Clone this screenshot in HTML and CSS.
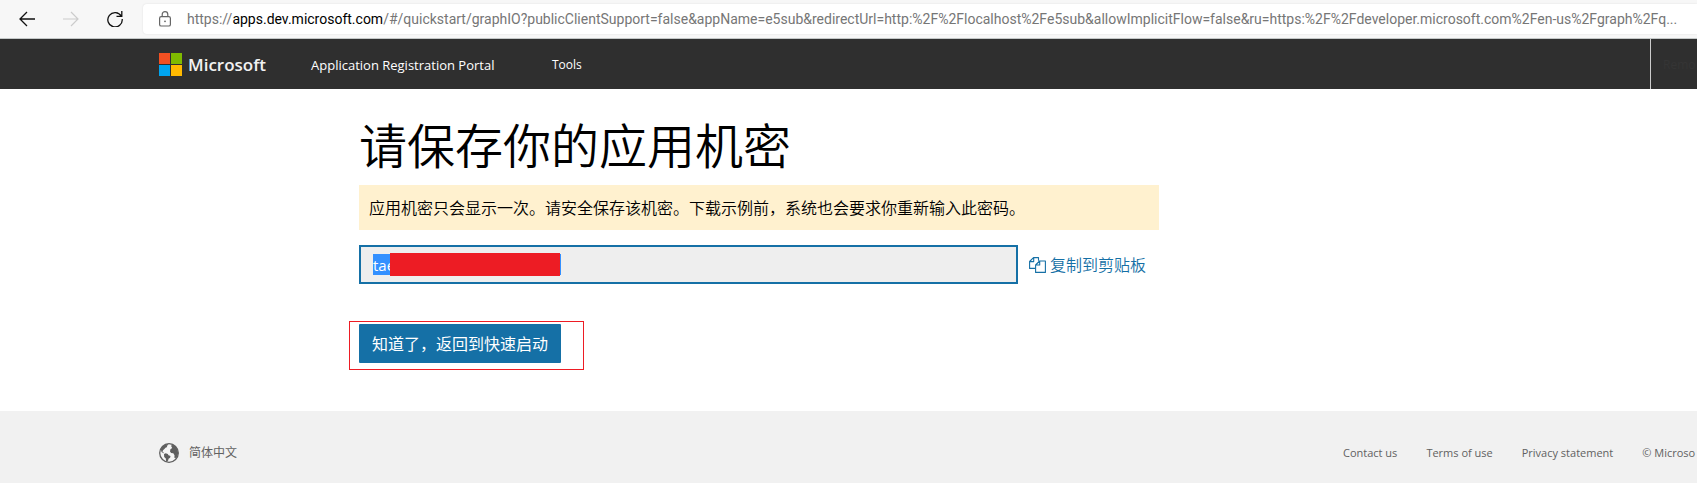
FILE: index.html
```html
<!DOCTYPE html>
<html lang="zh-CN">
<head>
<meta charset="utf-8">
<title>Application Registration Portal</title>
<link rel="stylesheet" href="styles.css">
</head>
<body>
<div class="toolbar">
  <button class="nav-button" type="button" aria-label="Back">
    <svg width="16" height="16" viewBox="0 0 16 16" fill="none" stroke="#111" stroke-width="1.3"><path d="M16 8H1M8 1L1 8l7 7"/></svg>
  </button>
  <button class="nav-button" type="button" aria-label="Forward" disabled>
    <svg width="16" height="16" viewBox="0 0 16 16" fill="none" stroke="#ccc" stroke-width="1.2"><path d="M0 8h15M8 1l7 7-7 7"/></svg>
  </button>
  <button class="nav-button" type="button" aria-label="Reload">
    <svg width="16" height="16" viewBox="0 0 16 16" fill="none" stroke="#111" stroke-width="1.3"><path d="M14.3 5.2A7.2 7.2 0 1 0 15.2 8M14.8 0v5.3H9.5"/></svg>
  </button>
  <div class="address">
    <svg class="lock" width="12" height="16" viewBox="0 0 12 16" fill="none" stroke="#666" stroke-width="1.2"><rect x=".6" y="5.6" width="10.8" height="9.4" rx="1.6"/><path d="M3.2 5.6V3.4a2.8 2.8 0 0 1 5.6 0v2.2"/><circle cx="6" cy="10.3" r=".9" fill="#666" stroke="none"/></svg>
    <span class="url">https://<span class="host">apps.dev.microsoft.com</span>/#/quickstart/graphIO?publicClientSupport=false&amp;appName=e5sub&amp;redirectUrl=http:%2F%2Flocalhost%2Fe5sub&amp;allowImplicitFlow=false&amp;ru=https:%2F%2Fdeveloper.microsoft.com%2Fen-us%2Fgraph%2Fq...</span>
  </div>
</div>

<header class="header">
  <a class="logo" href="#">
    <svg width="23" height="23" viewBox="0 0 23 23"><path fill="#f25022" d="M0 0h11v11H0z"/><path fill="#7fba00" d="M12 0h11v11H12z"/><path fill="#00a4ef" d="M0 12h11v11H0z"/><path fill="#ffb900" d="M12 12h11v11H12z"/></svg>
    <span>Microsoft</span>
  </a>
  <a class="portal" href="#">Application Registration Portal</a>
  <a class="tools" href="#">Tools</a>
  <div class="account">Remo</div>
</header>

<main class="main">
  <h1 class="title">请保存你的应用机密</h1>
  <p class="notice">应用机密只会显示一次。请安全保存该机密。下载示例前，系统也会要求你重新输入此密码。</p>
  <div class="secret-row">
    <div class="secret">
      <input class="secret-input" type="text" value="tae" aria-label="应用机密" readonly>
      <span class="redaction"></span>
    </div>
    <a class="copy" href="#">
      <svg width="17" height="16" viewBox="0 0 17 16" fill="none" stroke="#1570a6" stroke-width="1.1" stroke-linejoin="round"><path d="M6.4 11.4H.6V4.5L4.5.6h5v3.1M4.7.6v4H.6"/><path d="M10.6 4h5.8v11.4H6.6V8zM10.7 4v4H6.6"/></svg>
      <span>复制到剪贴板</span>
    </a>
  </div>
  <div class="highlight">
    <button class="primary" type="button">知道了，返回到快速启动</button>
  </div>
</main>

<footer class="footer">
  <a class="language" href="#">
    <svg width="20" height="20" viewBox="0 0 20 20"><circle cx="10" cy="10" r="9.3" fill="#f5f5f5" stroke="#5f5f5f" stroke-width="1.3"/><g fill="#5f5f5f"><path d="M2.2 5.2C4 2.8 6.2 1.3 8.9 1l.4 1-1.5.7.4 1.4-1.7.6L5.4 6 4 7.3l-.5 1.4 1.7 1.2-.5.4-2.2-1.4-.6-2.2z"/><path d="M5 11l1.7-.7 2.1.8.7 1.1 2 .8-.4 1.8-1.5 1-.5 1.7-1.3 1.5-.6-.2-.4-3.4L5.2 14z"/><path d="M12 2.6l2.3-.9 2.5 2.1 1.7 2.8.7 3.7-1 3.2-1.9 1.8-.9-.6.1-2.4-1.2-2.1-2.2-.3-1.1-1.5.4-2.2 1.8-1.2-.7-1.2z"/></g></svg>
    <span>简体中文</span>
  </a>
  <nav class="links">
    <a href="#">Contact us</a>
    <a href="#">Terms of use</a>
    <a href="#">Privacy statement</a>
    <span>© Microso</span>
  </nav>
</footer>
</body>
</html>
```
FILE: styles.css
```css
* {
  box-sizing: border-box;
}

body {
  margin: 0;
  background: #fff;
  color: #000;
  font-family: "Open Sans", "Noto Sans CJK SC", sans-serif;
  font-size: 16px;
  overflow-x: hidden;
}

a {
  color: inherit;
  text-decoration: none;
}

button {
  border: 0;
  font: inherit;
}

svg {
  display: block;
  flex: none;
}

.toolbar {
  display: flex;
  align-items: center;
  gap: 28px;
  height: 39px;
  padding-left: 19px;
  padding-bottom: 1px;
  background: #f7f7f7;
  border-bottom: 1px solid #c4c8c8;
}

.nav-button {
  padding: 0;
  background: none;
}

.address {
  display: flex;
  flex: 1;
  align-items: center;
  gap: 16px;
  min-width: 0;
  height: 30px;
  margin-left: -8px;
  padding-left: 16px;
  background: #fff;
  border-radius: 4px 0 0 4px;
  box-shadow: 0 0 2px #ddd;
}

.url {
  color: #767676;
  font-family: Roboto, sans-serif;
  font-size: 14px;
  white-space: nowrap;
}

.host {
  color: #000;
}

.header {
  display: flex;
  align-items: center;
  height: 50px;
  padding-left: 159px;
  background: #2f2f2f;
  color: #fff;
  white-space: nowrap;
}

.logo {
  display: flex;
  align-items: center;
  gap: 6px;
  width: 152px;
  color: #f2f2f2;
  font-size: 17px;
  font-weight: 600;
}

.portal {
  width: 241px;
  padding-top: 1px;
  font-size: 13px;
}

.tools {
  padding-top: 1px;
  font-size: 12px;
}

.account {
  display: flex;
  align-items: center;
  width: 47px;
  height: 100%;
  margin-left: auto;
  padding-left: 12px;
  border-left: 1px solid #ccc;
  color: #353535;
  font-size: 12px;
}

.main {
  max-width: 1159px;
  padding: 25px 0 41px 359px;
}

.title {
  margin: 0 0 7px;
  font-size: 48px;
  font-weight: 350;
  line-height: 64px;
}

.notice {
  margin: 0 0 15px;
  padding: 11px 10px 9px;
  background: #fff1cf;
  font-weight: 350;
  line-height: 25px;
}

.secret-row {
  display: flex;
  align-items: center;
  gap: 11px;
}

.secret {
  position: relative;
  flex: 0 1 659px;
  height: 39px;
  padding: 7px 12px;
  background: #eee;
  border: 2px solid #1570a6;
}

.secret-input {
  display: block;
  width: 188px;
  height: 21px;
  padding: 0;
  border: 0;
  background: #3390ff;
  color: #fff;
  font: inherit;
  font-size: 15px;
}

.redaction {
  position: absolute;
  top: 6px;
  left: 29px;
  width: 170px;
  height: 23px;
  background: #ed1c24;
}

.copy {
  display: flex;
  align-items: center;
  gap: 4px;
  color: #1570a6;
  font-weight: 350;
  line-height: 24px;
  white-space: nowrap;
}

.highlight {
  width: 235px;
  margin: 37px 0 0 -10px;
  padding: 2px 9px 6px;
  border: 1px solid #ed1c24;
}

.primary {
  display: block;
  height: 39px;
  padding: 0 13px;
  border-radius: 1px;
  background: #1570a6;
  color: #fff;
  line-height: 24px;
  white-space: nowrap;
}

.footer {
  display: flex;
  justify-content: space-between;
  height: 72px;
  padding: 32px 0 0 159px;
  background: #f1f1f1;
  color: #616161;
  font-size: 12px;
  line-height: 20px;
  white-space: nowrap;
}

.language {
  display: flex;
  gap: 10px;
  height: 20px;
}

.links {
  display: flex;
  gap: 29px;
  width: 354px;
  font-size: 11px;
}
```
